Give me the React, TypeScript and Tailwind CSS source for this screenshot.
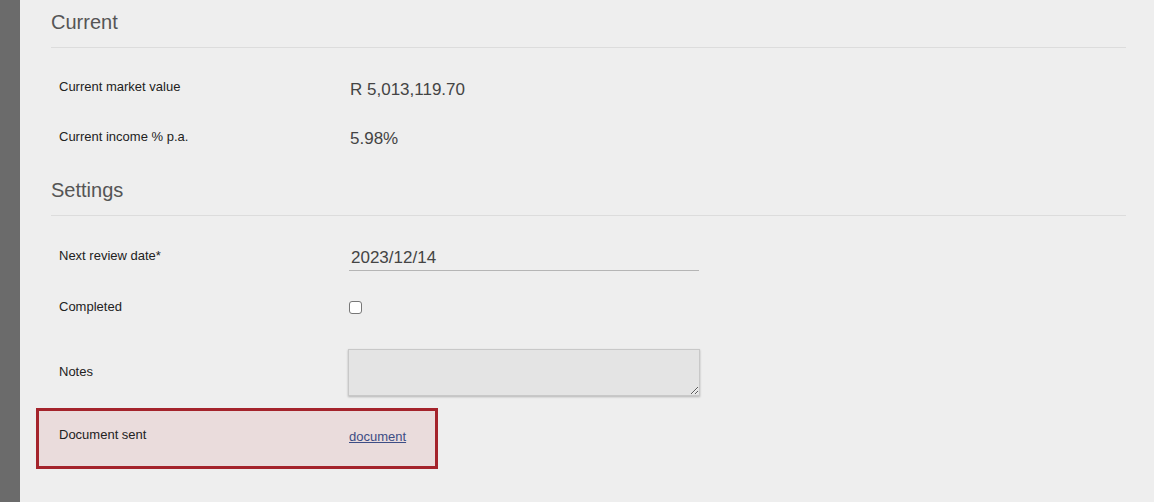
import React from "react";

const font = { fontFamily: '"Liberation Sans", Arial, sans-serif' };

export default function App() {
  return (
    <div className="flex min-h-[502px] w-full bg-[#eeeeee]" style={font}>
      <div className="w-5 shrink-0 bg-[#6b6b6b]" />
      <div className="flex-1 pl-[31px] pr-[28px]">
        {/* Current */}
        <h2 className="pt-[10px] text-[20px] leading-[24px] text-[#555]">Current</h2>
        <div className="mt-[13px] border-t border-[#dcdcdc]" />
        <div className="mt-[14px]">
          <div className="flex h-[50px] items-center">
            <div className="w-[299px] shrink-0 pl-2 text-[13px] text-[#222]">Current market value</div>
            <div className="mt-[5px] text-[17px] text-[#444]">R 5,013,119.70</div>
          </div>
          <div className="flex h-[50px] items-center">
            <div className="w-[299px] shrink-0 pl-2 text-[13px] text-[#222]">Current income % p.a.</div>
            <div className="mt-[4px] text-[17px] text-[#444]">5.98%</div>
          </div>
        </div>

        {/* Settings */}
        <h2 className="mt-[16px] text-[20px] leading-[24px] text-[#555]">Settings</h2>
        <div className="mt-[13px] border-t border-[#dcdcdc]" />
        <div className="mt-[15px]">
          <div className="flex h-[50px] items-center">
            <div className="w-[298px] shrink-0 pl-2 text-[13px] text-[#222]">Next review date*</div>
            <div className="mt-[6px] w-[350px] border-b border-[#b5b5b5] pb-[1px] pl-[2px] text-[17px] leading-[22px] text-[#444]">
              2023/12/14
            </div>
          </div>
          <div className="flex h-[52px] items-center">
            <div className="w-[298px] shrink-0 pl-2 text-[13px] text-[#222]">Completed</div>
            <input
              type="checkbox"
              className="m-0 h-[13px] w-[13px] appearance-none rounded-[3px] border border-[#777] bg-white"
            />
          </div>
          <div className="flex h-[78px] items-center">
            <div className="w-[297px] shrink-0 pl-2 text-[13px] text-[#222]">Notes</div>
            <textarea className="h-[47px] w-[352px] border border-[#c8c8c8] bg-[#e4e4e4] shadow-[0_1px_2px_rgba(0,0,0,0.25)] outline-none" />
          </div>
          <div className="-ml-[15px] mt-[-3px] flex h-[61px] w-[402px] border-[3px] border-[#a4232b] bg-[#eadcdc]">
            <div className="w-[310px] shrink-0 pl-[20px] pt-[14px] text-[13px] text-[#222]">Document sent</div>
            <a href="#" className="pt-[16px] text-[13px] text-[#3d4d85] underline">document</a>
          </div>
        </div>
      </div>
    </div>
  );
}
